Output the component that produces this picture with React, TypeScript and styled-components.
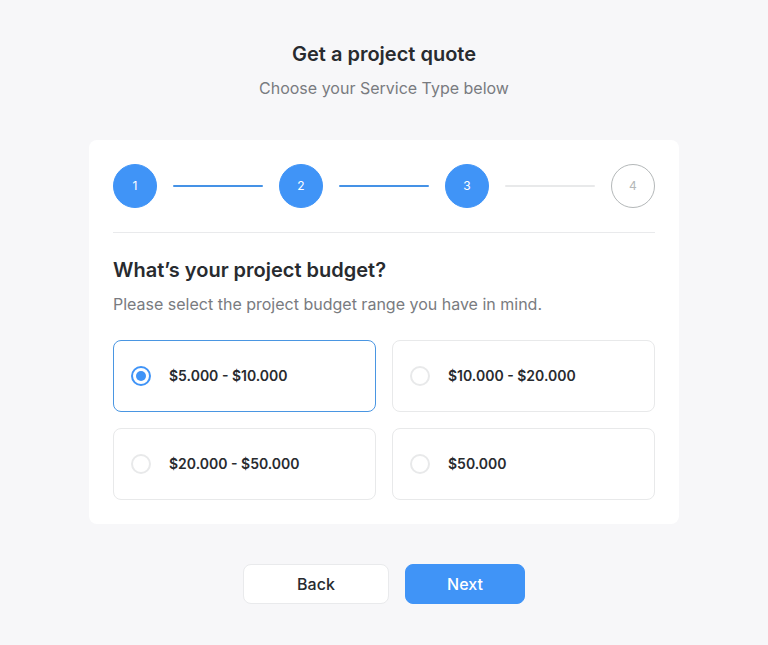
import React, { useState } from "react";
import styled, { createGlobalStyle } from "styled-components";

const GlobalStyle = createGlobalStyle`
  *, *::before, *::after { box-sizing: border-box; }
  body {
    margin: 0;
    background: #f7f7f9;
    color: #282b2f;
    font-family: Inter, "Liberation Sans", sans-serif;
  }
`;

const Page = styled.main`
  display: flex;
  flex-direction: column;
  align-items: center;
  padding: 40px 24px;
`;

const Title = styled.h1`
  margin: 0;
  font-size: 20px;
  line-height: 28px;
  font-weight: 600;
`;

const Subtitle = styled.p`
  margin: 8px 0 0;
  font-size: 16px;
  line-height: 24px;
  color: #797b80;
`;

const Form = styled.form`
  display: flex;
  flex-direction: column;
  align-items: center;
  width: 100%;
  max-width: 590px;
  margin-top: 40px;
`;

const Card = styled.section`
  width: 100%;
  padding: 24px;
  background: #ffffff;
  border-radius: 8px;
`;

const Stepper = styled.ol`
  display: flex;
  align-items: center;
  gap: 16px;
  margin: 0;
  padding: 0 0 24px;
  list-style: none;
  border-bottom: 1px solid #e9eaec;
`;

const Step = styled.li<{ $done: boolean }>`
  display: flex;
  flex: none;
  align-items: center;
  justify-content: center;
  width: 44px;
  height: 44px;
  border-radius: 50%;
  border: 1px solid ${(p) => (p.$done ? "#4094f7" : "#b4b8b9")};
  background: ${(p) => (p.$done ? "#4094f7" : "#ffffff")};
  color: ${(p) => (p.$done ? "#ffffff" : "#b4b8b9")};
  font-size: 12px;
  line-height: 16px;
`;

const StepLine = styled.li<{ $done: boolean }>`
  flex: 1;
  height: 2px;
  border-radius: 1px;
  background: ${(p) => (p.$done ? "#4592e6" : "#e8e9ea")};
`;

const Budget = styled.fieldset`
  min-width: 0;
  margin: 23px 0 0;
  padding: 0;
  border: 0;
`;

const Question = styled.legend`
  padding: 0;
  font-size: 20px;
  line-height: 28px;
  font-weight: 600;
`;

const Options = styled.div`
  display: grid;
  grid-template-columns: 1fr 1fr;
  gap: 16px;
  margin-top: 24px;
`;

const Option = styled.label<{ $selected: boolean }>`
  display: flex;
  align-items: center;
  gap: 18px;
  min-height: 72px;
  padding: 0 17px;
  border: 1px solid ${(p) => (p.$selected ? "#4a96e2" : "#e8e9ea")};
  border-radius: 8px;
  font-size: 14px;
  line-height: 20px;
  font-weight: 600;
  cursor: pointer;
`;

const Radio = styled.input`
  appearance: none;
  flex: none;
  width: 20px;
  height: 20px;
  margin: 0;
  border: 2px solid #e8e9ea;
  border-radius: 50%;
  background: #ffffff;
  cursor: pointer;

  &:checked {
    padding: 3px;
    border-color: #4094f7;
    background: #4094f7 content-box;
  }
`;

const Actions = styled.div`
  display: flex;
  gap: 16px;
  margin-top: 40px;
`;

const Button = styled.button<{ $primary?: boolean }>`
  width: ${(p) => (p.$primary ? "120px" : "146px")};
  height: 40px;
  padding: 0;
  border: 1px solid ${(p) => (p.$primary ? "#4094f7" : "#e9eaec")};
  border-radius: 8px;
  background: ${(p) => (p.$primary ? "#4094f7" : "#ffffff")};
  color: ${(p) => (p.$primary ? "#ffffff" : "#282b2f")};
  font: 500 16px/24px Inter, "Liberation Sans", sans-serif;
  cursor: pointer;
`;

const steps = [1, 2, 3, 4];
const currentStep = 3;
const budgets = ["$5.000 - $10.000", "$10.000 - $20.000", "$20.000 - $50.000", "$50.000"];

export default function App() {
  const [selected, setSelected] = useState(budgets[0]);

  return (
    <>
      <GlobalStyle />
      <Page>
        <Title>Get a project quote</Title>
        <Subtitle>Choose your Service Type below</Subtitle>
        <Form onSubmit={(e) => e.preventDefault()}>
          <Card>
            <Stepper>
              {steps.map((n) => (
                <React.Fragment key={n}>
                  {n > 1 && <StepLine $done={n <= currentStep} aria-hidden="true" />}
                  <Step $done={n <= currentStep} aria-current={n === currentStep ? "step" : undefined}>
                    {n}
                  </Step>
                </React.Fragment>
              ))}
            </Stepper>
            <Budget>
              <Question>What’s your project budget?</Question>
              <Subtitle>Please select the project budget range you have in mind.</Subtitle>
              <Options>
                {budgets.map((b) => (
                  <Option key={b} $selected={b === selected}>
                    <Radio
                      type="radio"
                      name="budget"
                      value={b}
                      checked={b === selected}
                      onChange={() => setSelected(b)}
                    />
                    {b}
                  </Option>
                ))}
              </Options>
            </Budget>
          </Card>
          <Actions>
            <Button type="button">Back</Button>
            <Button type="submit" $primary>
              Next
            </Button>
          </Actions>
        </Form>
      </Page>
    </>
  );
}
